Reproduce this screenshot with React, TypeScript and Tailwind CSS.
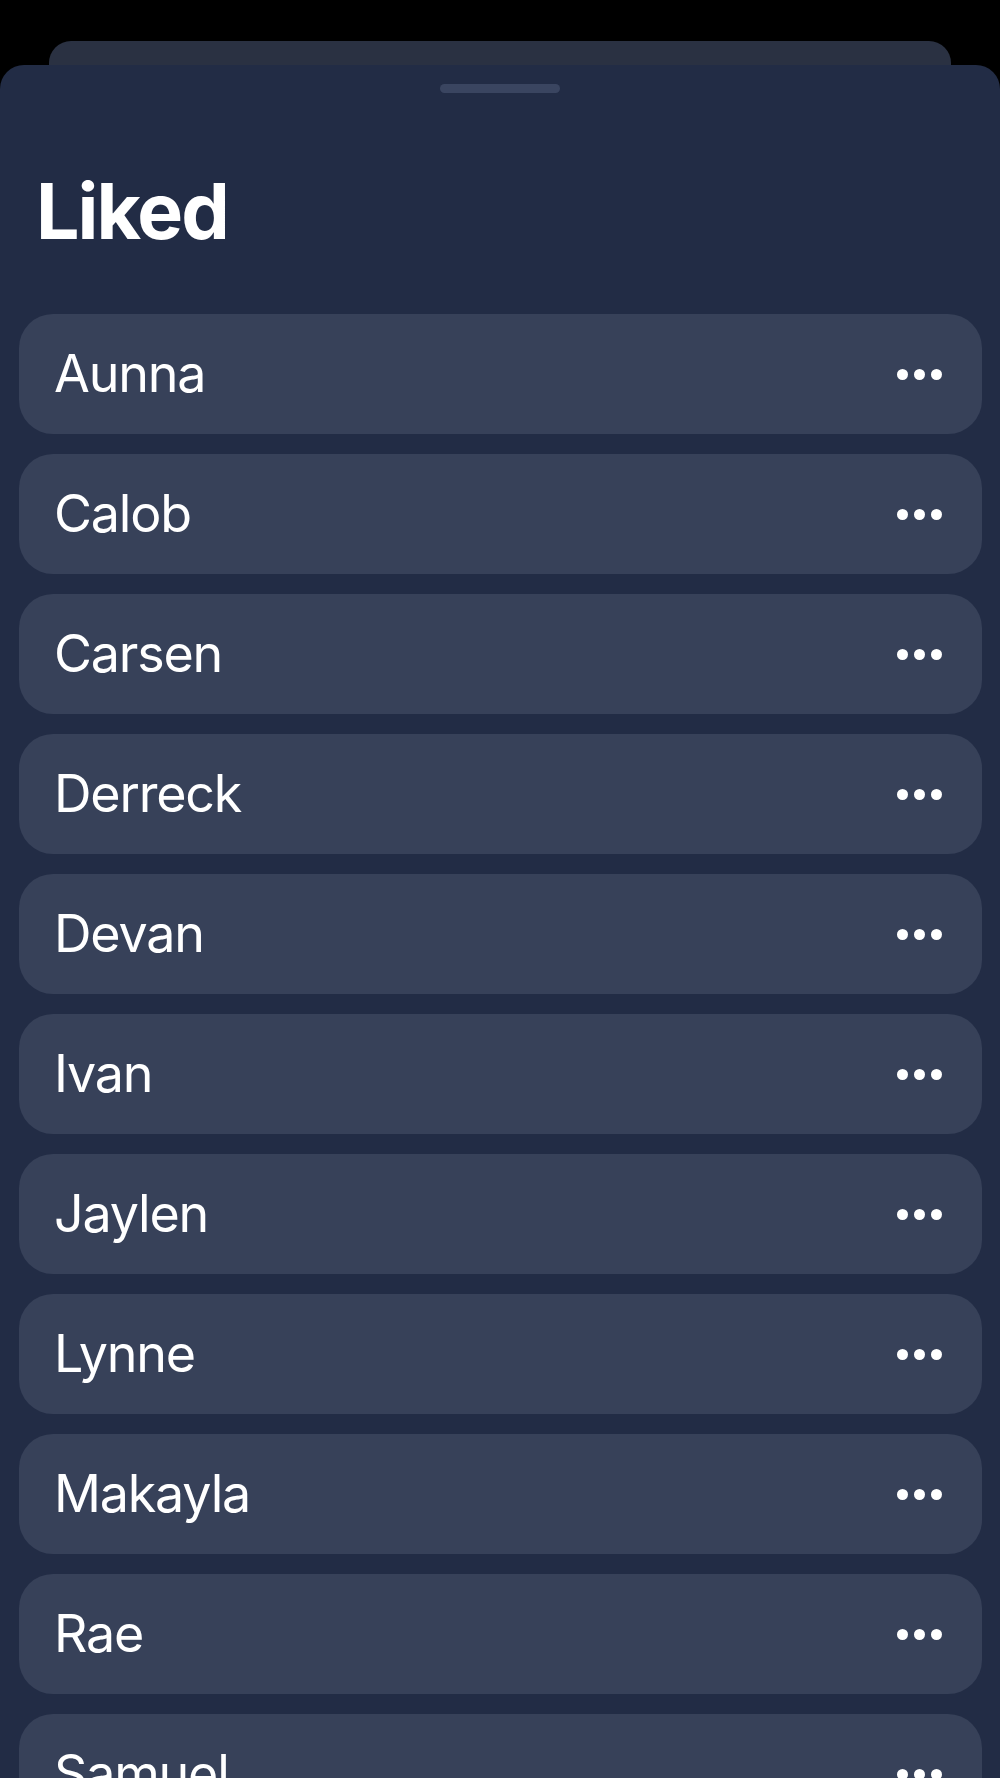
const names = [
  'Aunna',
  'Calob',
  'Carsen',
  'Derreck',
  'Devan',
  'Ivan',
  'Jaylen',
  'Lynne',
  'Makayla',
  'Rae',
  'Samuel',
];

const MoreDots = () => (
  <div className="flex items-center gap-[6px]">
    <span className="block h-[11px] w-[11px] rounded-full bg-white" />
    <span className="block h-[11px] w-[11px] rounded-full bg-white" />
    <span className="block h-[11px] w-[11px] rounded-full bg-white" />
  </div>
);

const LikedRow = ({ name }: { name: string }) => (
  <div className="flex h-[120px] items-center justify-between rounded-[34px] bg-[#374159] pl-[35px] pr-[40px]">
    <span className="text-[52px] leading-none tracking-[-1.2px] text-white">{name}</span>
    <MoreDots />
  </div>
);

export default function App() {
  return (
    <div
      className="h-[1778px] overflow-hidden bg-black pt-[41px]"
      style={{ fontFamily: 'Inter, "Liberation Sans", sans-serif' }}
    >
      {/* stacked sheet behind */}
      <div className="mx-[49px] h-[24px] rounded-t-[22px] bg-[#2a3142]" />

      <div className="min-h-[1713px] rounded-t-[24px] bg-[#222c45] pt-[19px]">
        <div className="mx-auto h-[9px] w-[120px] rounded-full bg-[#3a4560]" />

        <h1 className="mt-[80px] pl-[36px] text-[77px] font-bold leading-none tracking-[-2px] text-white">
          Liked
        </h1>

        <div className="mt-[64px] flex flex-col gap-[20px] pl-[19px] pr-[18px]">
          {names.map((n) => (
            <LikedRow key={n} name={n} />
          ))}
        </div>
      </div>
    </div>
  );
}
